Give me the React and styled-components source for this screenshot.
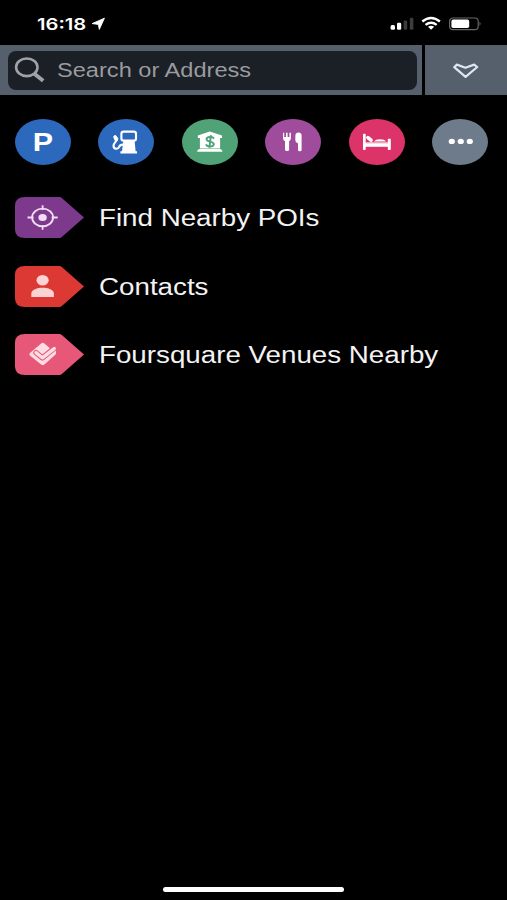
import React from 'react';
import styled, { createGlobalStyle } from 'styled-components';

const GlobalStyle = createGlobalStyle`
  body {
    margin: 0;
    background: #000;
    font-family: 'Liberation Sans', Arial, sans-serif;
  }
`;

const Screen = styled.div`
  display: flex;
  flex-direction: column;
  width: 507px;
  height: 900px;
  overflow: hidden;
  background: #000;
`;

const StatusBar = styled.div`
  display: flex;
  justify-content: space-between;
  box-sizing: border-box;
  height: 45px;
  padding: 13px 25px 0 37px;
`;

const StatusGroup = styled.div`
  display: flex;
  align-items: center;
  height: 21px;
`;

const Time = styled.div`
  width: 54px;
  padding-top: 1px;
  color: #fff;
  font: 600 16px/21px Inter, sans-serif;
  white-space: nowrap;
  transform: scaleX(1.26);
  transform-origin: left;
`;

const Header = styled.div`
  display: flex;
  gap: 3px;
  height: 50px;
  margin-bottom: 24px;
`;

const SearchPanel = styled.div`
  box-sizing: border-box;
  width: 422px;
  padding: 6px 5px 5px 8px;
  background: #565f6c;
`;

const SearchField = styled.div`
  display: flex;
  align-items: center;
  height: 39px;
  padding-left: 6px;
  border-radius: 8px;
  background: #1b1f26;
`;

const Placeholder = styled.span`
  margin-left: 12px;
  padding-bottom: 1px;
  color: #999b9f;
  font-size: 20px;
  line-height: 38px;
  white-space: nowrap;
  transform: scaleX(1.18);
  transform-origin: left;
`;

const CollapseButton = styled.div`
  display: flex;
  flex: 1;
  align-items: center;
  justify-content: center;
  background: #565f6c;
`;

const Categories = styled.div`
  display: flex;
  justify-content: space-between;
  padding: 0 19px 0 15px;
`;

const Category = styled.div`
  width: 56px;
  height: 46px;
  border-radius: 50%;
  background: ${(props) => props.color};

  svg {
    display: block;
  }
`;

const Letter = styled.div`
  color: #fff;
  font-size: 26px;
  font-weight: bold;
  line-height: 47px;
  text-align: center;
  transform: scaleX(1.17);
`;

const List = styled.div`
  display: flex;
  flex-direction: column;
  gap: 27.5px;
  margin-top: 32px;
  padding-left: 15px;
`;

const Item = styled.div`
  display: flex;
  align-items: center;
  gap: 14px;
  height: 41px;

  svg {
    display: block;
  }
`;

const Label = styled.span`
  padding-top: 2px;
  color: #f3f3f3;
  font-size: 23px;
  line-height: 41px;
  white-space: nowrap;
  transform: scaleX(1.206);
  transform-origin: left;
`;

const HomeIndicator = styled.div`
  width: 181px;
  height: 5px;
  margin: auto 0 8px 163px;
  border-radius: 3px;
  background: #fff;
`;

const LocationArrow = () => (
  <svg width="15" height="14" viewBox="0 0 15 14">
    <path
      d="M13.4 1.2 L8.3 12.4 L7.4 7.4 L1.2 6.6 Z"
      fill="#fff"
      stroke="#fff"
      strokeWidth="0.9"
      strokeLinejoin="round"
    />
  </svg>
);

const StatusIcons = () => (
  <svg width="94" height="21" viewBox="0 0 94 21">
    <rect x="2.6" y="12" width="4.4" height="4.8" rx="1.5" fill="#fff" />
    <rect x="9" y="9.7" width="4.2" height="7.1" rx="1.3" fill="#fff" />
    <rect x="15.6" y="7.4" width="3.6" height="9.3" rx="1.2" fill="#3c3c3c" />
    <rect x="21.8" y="4.8" width="3.6" height="11.9" rx="1.2" fill="#3c3c3c" />
    <g fill="none" stroke="#fff" strokeWidth="2.4">
      <path d="M34.3 8.5 Q43.1 1.5 51.9 8.5" />
      <path d="M37.5 11.9 Q43.1 7.5 48.7 11.9" />
    </g>
    <path d="M40 13.8 Q43.1 11.6 46.2 13.8 L43.1 16.7 Z" fill="#fff" />
    <rect x="61.6" y="5" width="28.6" height="11.6" rx="3.4" fill="none" stroke="#666" strokeWidth="1.2" />
    <rect x="63.4" y="6.6" width="17.8" height="8.4" rx="1.8" fill="#fff" />
    <path d="M91.5 8.8 Q93.8 10.8 91.5 12.8 Z" fill="#666" />
  </svg>
);

const Magnifier = () => (
  <svg width="31" height="28" viewBox="0 0 31 28">
    <ellipse cx="12.8" cy="10.3" rx="10.7" ry="8.8" fill="none" stroke="#a0a2a5" strokeWidth="2.6" />
    <path d="M20 16.4 L29.2 23.8" stroke="#a0a2a5" strokeWidth="3.9" />
  </svg>
);

const Collapse = () => (
  <svg width="28" height="18" viewBox="0 0 28 18">
    <path
      d="M2.2 6.2 L4.9 3.6 L13.4 6.8 L22.2 3.6 L25.2 6 L13.6 15.8 Z"
      fill="none"
      stroke="#dee6f1"
      strokeWidth="2.2"
      strokeLinejoin="round"
    />
  </svg>
);

const Glyph = ({ children }) => (
  <svg width="56" height="46" viewBox="0 0 56 46" fill="#fff">
    {children}
  </svg>
);

const Fuel = () => (
  <Glyph>
    <rect x="23.4" y="12.6" width="14.6" height="9" rx="2.2" fill="none" stroke="#fff" strokeWidth="2.1" />
    <path d="M25.4 21.8 H36.6 L37.6 32.2 H39 V34.5 H22.4 V32.2 H24 Z" />
    <path
      d="M17 17.2 L18.9 20 C19 22.6 15.4 23.8 15.5 26.9 C15.6 30.6 20.2 30.4 21.1 28 C21.8 26 22.4 25.6 24.8 25.6"
      fill="none"
      stroke="#fff"
      strokeWidth="2.1"
      strokeLinecap="round"
    />
    <path d="M15 17.4 L17.8 16.2 L20.4 19.4 L19.6 22 L16.6 21.4 Z" />
  </Glyph>
);

const Bank = ({ color }) => (
  <Glyph>
    <path d="M27.7 12.4 L40 16.6 V19 H38.1 V29.4 H17.9 V19 H15.8 V16.6 Z" />
    <path d="M17 30 H38.6 L40.3 31.8 V32.8 H15.2 V31.8 Z" />
    <path
      d="M32 19.7 C31 17.3 24.5 17.5 24.5 20.2 C24.5 23.3 31.8 22 31.8 25.2 C31.8 28 25 28.1 23.9 25.4 M28.9 16.2 L27.4 28.8"
      fill="none"
      stroke={color}
      strokeWidth="1.9"
    />
  </Glyph>
);

const Food = () => (
  <Glyph>
    <path d="M18 13.8 H19.2 V18 H21 V13.8 H22.6 V18 H24.4 V13.8 H25.9 V19 Q25.9 21.4 24.1 22.2 V30.8 Q24.1 32 22.1 32 Q20 32 20 30.8 V22.2 Q18 21.3 18 19 Z" />
    <path d="M30.4 16.2 Q30.8 13.5 33.4 13.5 Q36.6 13.6 36.6 16.7 V31 Q36.6 32.2 34.8 32.2 Q33 32.2 33 31 V24.2 Q30.3 23.6 30.3 20.5 Z" />
  </Glyph>
);

const Bed = () => (
  <Glyph>
    <rect x="14" y="14.8" width="2.7" height="16.2" rx="0.8" />
    <rect x="38.8" y="19.8" width="3" height="11.2" rx="0.8" />
    <path d="M15.5 23.4 H40 V27.8 H15.5 Z" />
    <path d="M16.7 24.1 H39" stroke="#ee88a5" strokeWidth="0.5" />
    <path d="M18.9 18.6 L22 21.2" stroke="#fff" strokeWidth="3.7" strokeLinecap="round" />
    <path d="M24.8 22.4 Q26.6 20.4 30.8 20.3 Q35.4 20.2 37.4 22.4 Z" />
  </Glyph>
);

const More = () => (
  <Glyph>
    <ellipse cx="19.8" cy="22.4" rx="3.1" ry="2.7" />
    <ellipse cx="28.8" cy="22.4" rx="3.1" ry="2.7" />
    <ellipse cx="37.8" cy="22.4" rx="3.1" ry="2.7" />
  </Glyph>
);

const Tag = ({ color, children }) => (
  <svg width="70" height="41" viewBox="0 0 70 41">
    <path
      d="M10 0 H44.5 Q45.8 0 46.8 1 L69 20.5 L46.8 40 Q45.8 41 44.5 41 H10 Q0 41 0 32.5 V8.5 Q0 0 10 0 Z"
      fill={color}
    />
    {children}
  </svg>
);

const Target = () => (
  <g fill="none" stroke="#f0ddf4" strokeWidth="1.8">
    <ellipse cx="27.6" cy="20.5" rx="10.5" ry="8.8" />
    <path d="M27.6 8.2 V13 M27.6 28 V32.8 M12.5 20.5 H18.6 M36.6 20.5 H42.7" />
    <ellipse cx="27.6" cy="20.5" rx="4.2" ry="3.6" fill="#f0ddf4" stroke="none" />
  </g>
);

const Person = () => (
  <g fill="#fbd3d2">
    <ellipse cx="27.6" cy="14.2" rx="6.1" ry="5.3" />
    <path d="M16.3 31 V27.6 C16.3 23.6 22.5 21.8 27.6 21.8 C33 21.8 38.9 23.6 38.9 27.6 V31 Z" />
  </g>
);

// diamond first, then the check mark with a gap around it
const Foursquare = ({ color }) => (
  <g>
    <path
      d="M26.2 9.4 Q27.8 8.3 29.4 9.4 L35 14.2 L31.5 18.5 L41 16.6 V19.2 Q41 20.2 40 21 L29.4 30.4 Q27.8 31.7 26.2 30.4 L14.9 21.4 Q13.7 20.2 14.9 19 Z"
      fill="#ffdce4"
    />
    <path
      d="M21 18.6 L27.4 23.8 L40 13.6"
      fill="none"
      stroke={color}
      strokeWidth="5.4"
      strokeLinecap="round"
      strokeLinejoin="round"
    />
    <path
      d="M21 18.6 L27.4 23.8 L39.2 14.6"
      fill="none"
      stroke="#ffdce4"
      strokeWidth="3.4"
      strokeLinecap="round"
      strokeLinejoin="round"
    />
  </g>
);

const categories = [
  { name: 'parking', color: '#2c69bd', icon: <Letter>P</Letter> },
  { name: 'fuel', color: '#2c69bd', icon: <Fuel /> },
  { name: 'bank', color: '#4fa376', icon: <Bank color="#4fa376" /> },
  { name: 'food', color: '#a04c9d', icon: <Food /> },
  { name: 'hotel', color: '#dc3468', icon: <Bed /> },
  { name: 'more', color: '#6d7b8b', icon: <More /> },
];

const items = [
  { label: 'Find Nearby POIs', color: '#7d398b', icon: <Target /> },
  { label: 'Contacts', color: '#dd3934', icon: <Person /> },
  { label: 'Foursquare Venues Nearby', color: '#e75778', icon: <Foursquare color="#e75778" /> },
];

const App = () => (
  <>
    <GlobalStyle />
    <Screen>
      <StatusBar>
        <StatusGroup>
          <Time>16:18</Time>
          <LocationArrow />
        </StatusGroup>
        <StatusIcons />
      </StatusBar>
      <Header>
        <SearchPanel>
          <SearchField>
            <Magnifier />
            <Placeholder>Search or Address</Placeholder>
          </SearchField>
        </SearchPanel>
        <CollapseButton>
          <Collapse />
        </CollapseButton>
      </Header>
      <Categories>
        {categories.map(({ name, color, icon }) => (
          <Category key={name} color={color}>
            {icon}
          </Category>
        ))}
      </Categories>
      <List>
        {items.map(({ label, color, icon }) => (
          <Item key={label}>
            <Tag color={color}>{icon}</Tag>
            <Label>{label}</Label>
          </Item>
        ))}
      </List>
      <HomeIndicator />
    </Screen>
  </>
);

export default App;
